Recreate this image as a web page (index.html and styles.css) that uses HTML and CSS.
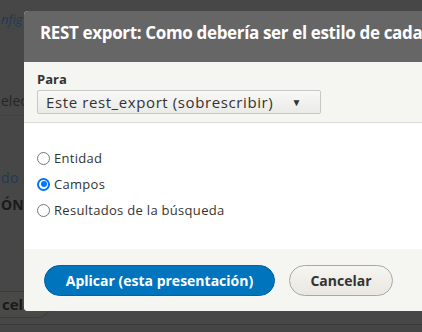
FILE: index.html
```html
<!DOCTYPE html>
<html lang="es">
<head>
<meta charset="utf-8">
<link rel="stylesheet" href="styles.css">
</head>
<body>
<div class="page">
  <div class="bg-row bg-link">nfig</div>
  <div class="bg-row bg-text">elecc</div>
  <div class="bg-row bg-blue">do (</div>
  <div class="bg-row bg-bold">ÓN</div>
  <div class="bg-row bg-btn"><span class="bg-button">cela</span></div>
  <div class="bg-bar"></div>
</div>

<div class="dialog">
  <div class="dialog-title">REST export: Como debería ser el estilo de cada</div>
  <div class="dialog-top">
    <label class="field-label">Para</label>
    <div class="select"><span>Este rest_export (sobrescribir)</span><span class="arrow">▼</span></div>
  </div>
  <div class="dialog-body">
    <label class="radio"><span class="circle"></span>Entidad</label>
    <label class="radio"><span class="circle checked"></span>Campos</label>
    <label class="radio"><span class="circle"></span>Resultados de la búsqueda</label>
  </div>
  <div class="dialog-footer">
    <span class="btn btn-primary">Aplicar (esta presentación)</span>
    <span class="btn btn-secondary">Cancelar</span>
  </div>
</div>
</body>
</html>
```

FILE: styles.css
```css
html, body {
  margin: 0;
  padding: 0;
}
body {
  width: 422px;
  height: 332px;
  overflow: hidden;
  background: #474747;
  font-family: "Open Sans", "Noto Sans", sans-serif;
  position: relative;
}
.page {
  display: flex;
  flex-direction: column;
  height: 332px;
}
.bg-row {
  font-size: 13px;
  white-space: nowrap;
  padding-left: 1px;
}
.bg-link {
  margin-top: 10px;
  font-style: italic;
  color: #1e3955;
  height: 18px;
  border-bottom: 1px solid #434343;
}
.bg-text {
  margin-top: 62px;
  color: #262626;
  height: 24px;
  font-size: 14px;
  border-bottom: 1px solid #434343;
}
.bg-blue {
  margin-top: 52px;
  color: #1e3955;
  letter-spacing: 0.5px;
  font-size: 14px;
}
.bg-bold {
  margin-top: 8px;
  font-weight: bold;
  color: #1a1a1a;
  font-size: 14px;
}
.bg-btn {
  margin-top: 77px;
  margin-left: -8px;
}
.bg-button {
  display: inline-block;
  padding: 2px 18px 3px 8px;
  border: 1px solid #3c3c3c;
  border-radius: 0 14px 14px 0;
  font-weight: bold;
  font-size: 15px;
  color: #1a1a1a;
  background: #494948;
}
.bg-bar {
  margin-top: 6px;
  border-top: 1px solid #3a3a3a;
  flex: 1;
  background: #454545;
}

.dialog {
  position: absolute;
  left: 24px;
  top: 11px;
  width: 398px;
  border-radius: 4px 0 0 4px;
  overflow: hidden;
  background: #fff;
}
.dialog-title {
  background: #666;
  color: #fff;
  font-weight: bold;
  font-size: 17px;
  height: 51px;
  line-height: 43px;
  padding-left: 16px;
  white-space: nowrap;
  letter-spacing: -0.35px;
}
.dialog-top {
  background: #f5f5f2;
  padding: 8px 0 8px 13px;
  border-bottom: 1px solid #d9d9d6;
}
.field-label {
  display: block;
  font-weight: bold;
  font-size: 13px;
  color: #333;
  line-height: 18px;
}
.select {
  margin-top: 2px;
  width: 256px;
  height: 22px;
  border: 1px solid #c8c8c4;
  border-radius: 2px;
  background: linear-gradient(#f8f8f6, #eaeae7);
  display: flex;
  align-items: center;
  justify-content: space-between;
  padding: 0 18px 0 8px;
  font-size: 15px;
  letter-spacing: 0.6px;
  color: #333;
}
.arrow {
  font-size: 10px;
  color: #333;
}
.dialog-body {
  padding: 25px 0 29px 13px;
  display: flex;
  flex-direction: column;
  gap: 6px;
  background: #fff;
}
.radio {
  display: flex;
  align-items: center;
  font-size: 13px;
  color: #333;
  line-height: 20px;
  letter-spacing: 0.3px;
}
.circle {
  width: 11px;
  height: 11px;
  border: 1px solid #767676;
  border-radius: 50%;
  margin-right: 4px;
  box-sizing: content-box;
  background: #fff;
}
.circle.checked {
  border: 2px solid #0075ff;
  width: 9px;
  height: 9px;
  position: relative;
}
.circle.checked::after {
  content: "";
  position: absolute;
  left: 1.5px;
  top: 1.5px;
  width: 6px;
  height: 6px;
  border-radius: 50%;
  background: #0075ff;
}
.dialog-footer {
  background: #f5f5f2;
  height: 62px;
  display: flex;
  align-items: center;
  padding-left: 20px;
  gap: 14px;
}
.btn {
  display: inline-flex;
  align-items: center;
  justify-content: center;
  height: 31px;
  box-sizing: border-box;
  border-radius: 16px;
  font-weight: bold;
  font-size: 14px;
}
.btn-primary {
  width: 231px;
  background: #0074bd;
  color: #fff;
  border: 1px solid #0062a0;
}
.btn-secondary {
  width: 104px;
  background: linear-gradient(#f6f5f0, #e8e7e1);
  color: #333;
  border: 1px solid #a8a8a5;
}
```
